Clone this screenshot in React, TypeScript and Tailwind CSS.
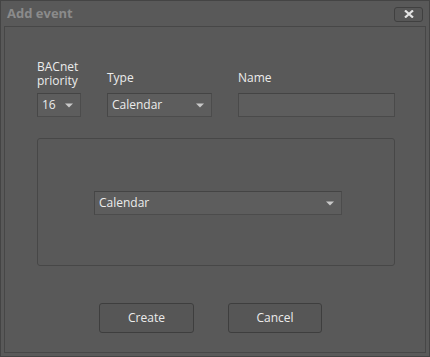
import React from "react";

// small light triangle used in the dropdowns
function Caret() {
  return (
    <svg width="8" height="5" viewBox="0 0 8 5" className="shrink-0">
      <path d="M0 0.5 H8 L4 4.5 Z" fill="#c9c9c9" />
    </svg>
  );
}

function Select({ value, className }: { value: string; className: string }) {
  return (
    <div
      className={
        "flex h-[24px] items-center justify-between border border-[#4c4c4c] border-t-[#444444] border-l-[#474747] bg-[#5d5d5d] pl-[4px] pr-[7px] text-[12px] text-[#ececec] " +
        className
      }
    >
      <span>{value}</span>
      <Caret />
    </div>
  );
}

export default function App() {
  return (
    <div
      className="flex h-[357px] w-[430px] flex-col border border-[#444444] bg-[#595959] px-[3px] pb-[3px]"
      style={{ fontFamily: '"Open Sans", "Noto Sans", sans-serif' }}
    >
      {/* title bar */}
      <div className="flex h-[25px] items-center justify-between pl-[3px] pr-[3px]">
        <span className="text-[13px] font-bold text-[#8b8b8b]">Add event</span>
        <button className="mt-[1px] flex h-[15px] w-[29px] items-center justify-center rounded-[3px] border border-[#404040] bg-[#575757]">
          <svg width="10" height="8" viewBox="0 0 10 8">
            <path d="M1 0.5 L9 7.5 M9 0.5 L1 7.5" stroke="#e4e4e4" strokeWidth="2.2" />
          </svg>
        </button>
      </div>

      {/* body */}
      <div className="flex flex-1 flex-col border border-[#474747] pl-[32px] pt-[33px]">
        <div className="flex items-end text-[12px] leading-[14px] text-[#ececec]">
          <div className="flex w-[70px] flex-col gap-[5px]">
            <span>
              BACnet
              <br />
              priority
            </span>
            <Select value="16" className="w-[44px]" />
          </div>
          <div className="flex w-[131px] flex-col gap-[8px]">
            <span>Type</span>
            <Select value="Calendar" className="w-[105px]" />
          </div>
          <div className="flex flex-col gap-[8px]">
            <span>Name</span>
            <div className="h-[24px] w-[157px] border border-[#4a4a4a] border-t-[#444444] bg-[#5d5d5d]" />
          </div>
        </div>

        <div className="mt-[21px] flex h-[128px] w-[358px] items-start rounded-[3px] border border-[#474747] pl-[56px] pt-[52px]">
          <Select value="Calendar" className="w-[248px] pl-[3px]" />
        </div>

        <div className="mt-[37px] flex gap-[34px] pl-[62px] text-[12px] text-[#ececec]">
          <button className="h-[30px] w-[95px] rounded-[3px] border border-[#3e3e3e] bg-[#565656]">
            Create
          </button>
          <button className="h-[30px] w-[94px] rounded-[3px] border border-[#3e3e3e] bg-[#565656]">
            Cancel
          </button>
        </div>
      </div>
    </div>
  );
}
